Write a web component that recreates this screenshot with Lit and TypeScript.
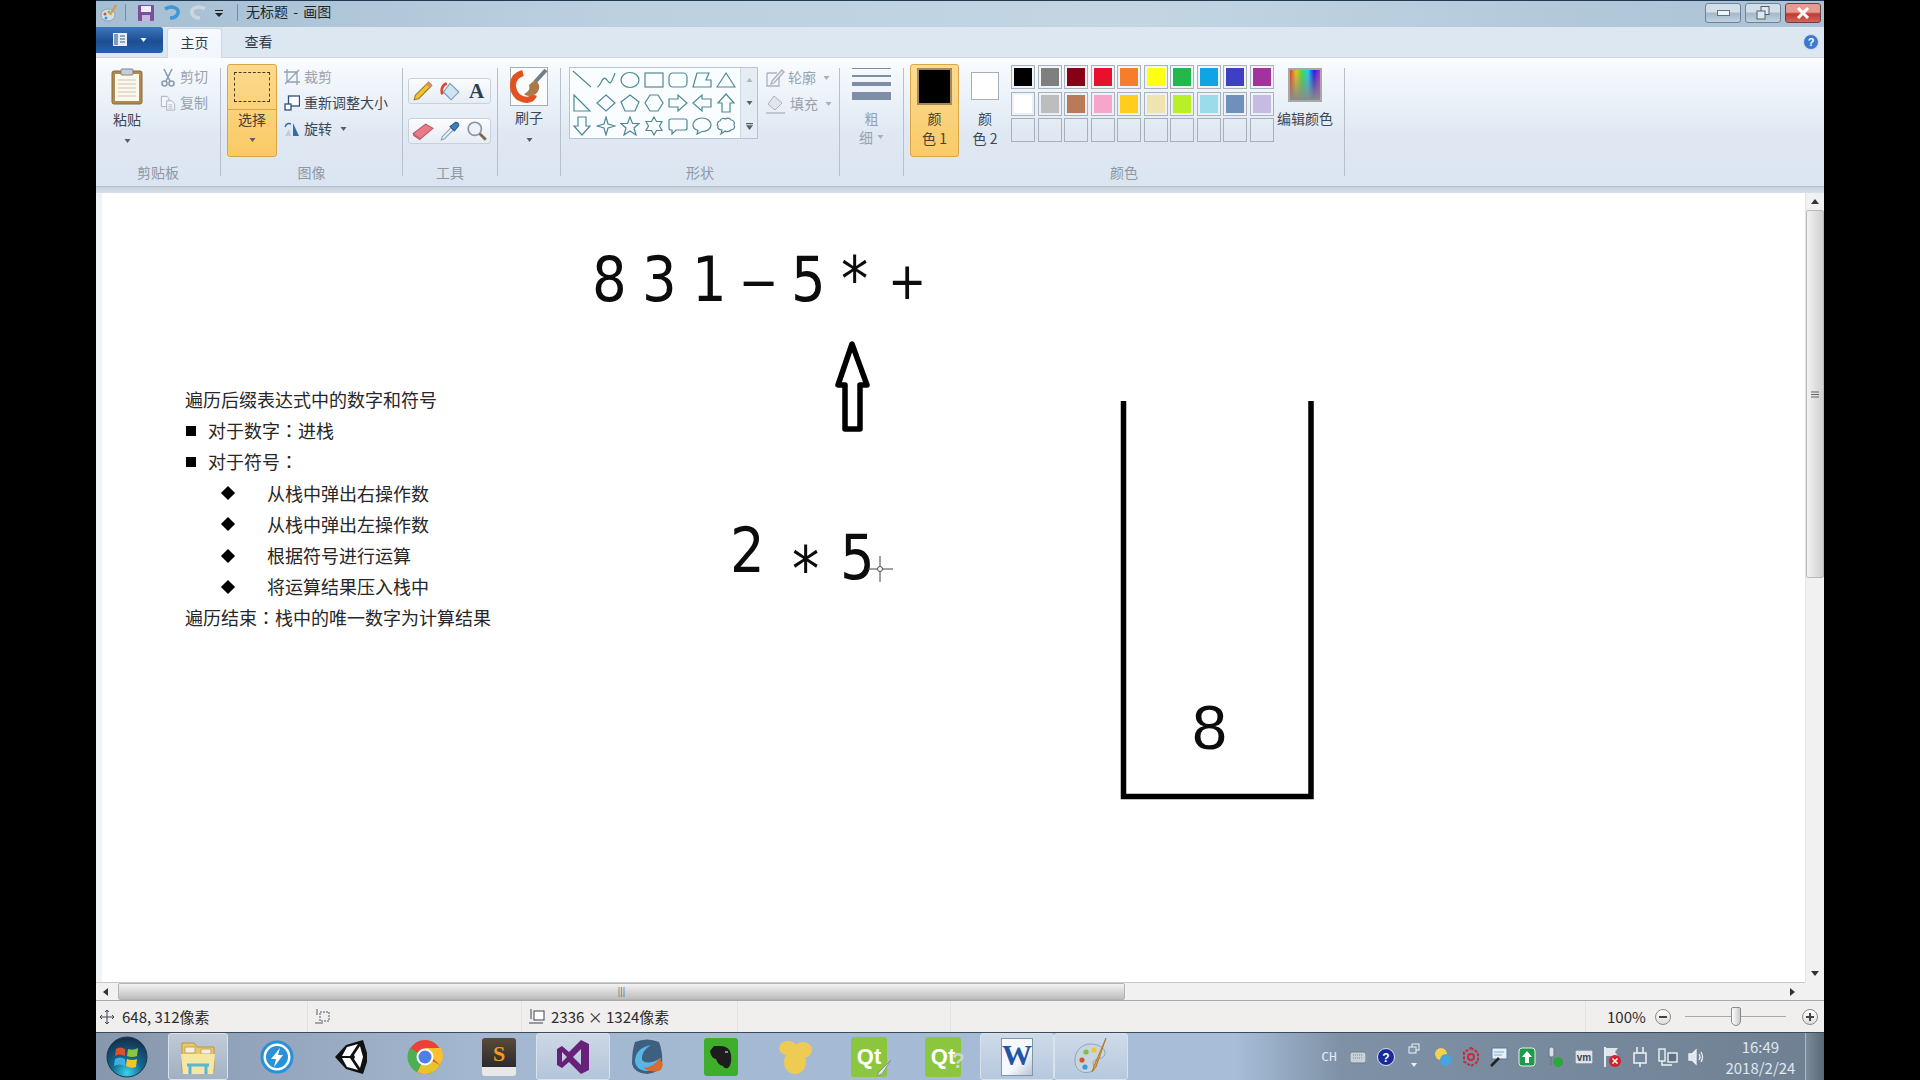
import { LitElement, html, css, svg } from 'lit';
import { customElement } from 'lit/decorators.js';

const paletteRows = [
  ['#000000', '#7f7f7f', '#880015', '#e8112d', '#f77c2c', '#ffff14', '#22b84c', '#0ea5e4', '#3f3fc4', '#a0349c'],
  ['#ffffff', '#bdbdbd', '#b97a57', '#f7a5c8', '#ffce1c', '#efe4b0', '#b9ef26', '#9bdcea', '#7090bc', '#c6bce2'],
];

// shape gallery outlines, 20x20 box
const shapes = [
  svg`<path d="M1 1 19 17"/>`,
  svg`<path d="M1 17C5 17 6 5 10 9S14 17 19 3"/>`,
  svg`<ellipse cx="10" cy="10" rx="9" ry="7.5"/>`,
  svg`<rect x="1" y="3" width="18" height="14"/>`,
  svg`<rect x="1" y="3" width="18" height="14" rx="4"/>`,
  svg`<path d="M1 17 5 3H17L14 10H19V17Z"/>`,
  svg`<path d="M10 3 19 17H1Z"/>`,
  svg`<path d="M2 2 18 18H2Z"/>`,
  svg`<path d="M10 2 19 10 10 18 1 10Z"/>`,
  svg`<path d="M10 2 19 9 15 18H5L1 9Z"/>`,
  svg`<path d="M6 2H14L19 10 14 18H6L1 10Z"/>`,
  svg`<path d="M1 6H10V2L19 10 10 18V14H1Z"/>`,
  svg`<path d="M19 6H10V2L1 10 10 18V14H19Z"/>`,
  svg`<path d="M6 19V10H2L10 1 18 10H14V19Z"/>`,
  svg`<path d="M6 1V10H2L10 19 18 10H14V1Z"/>`,
  svg`<path d="M10 1 12 8 19 10 12 12 10 19 8 12 1 10 8 8Z"/>`,
  svg`<path d="M10 1 12.5 7.5H19L14 12 16 19 10 15 4 19 6 12 1 7.5H7.5Z"/>`,
  svg`<path d="M10 1 12.5 5.5H18L15.5 10 18 14.5H12.5L10 19 7.5 14.5H2L4.500 10 2 5.500H7.500Z"/>`,
  svg`<path d="M3 3H17Q19 3 19 5V12Q19 14 17 14H8L4 18V14H3Q1 14 1 12V5Q1 3 3 3Z"/>`,
  svg`<path d="M10 2C15 2 19 5 19 9S15 15.500 10 15.500L5 18 6 14.500C3 13.500 1 11.500 1 9 1 5 5 2 10 2Z"/>`,
  svg`<path d="M4 5C5 2 8 2 9.500 3 11 1.500 14 2 15 4 18 4 19 7 18 9 19.500 11 18 14 15 14 13 16 10 16 9 15L5 18 6 14C3 14 1 12 2 10 0.500 8 2 5 4 5Z"/>`,
];

const caret = html`<svg class="caret" viewBox="0 0 6 4"><path d="M0 0H6L3 4Z"/></svg>`;

const icons = {
  appMenu: html`<svg width="22" height="14" viewBox="0 0 22 14"><rect width="14" height="13" fill="#e8eef6"/><path d="M1 1H5V12H1Z" fill="#7f9cc0"/><path d="M7 3H12M7 6H12M7 9H12" stroke="#3a5f8e"/></svg>`,
  clipboard: html`<svg width="32" height="37" viewBox="0 0 32 37"><rect x="1" y="3" width="30" height="33" rx="2" fill="#b08a50" stroke="#8a6a38"/><rect x="4" y="6" width="24" height="27" fill="#fbf8ec"/><path d="M7 12H25M7 16H25M7 20H25M7 24H25M7 28H25" stroke="#c9c6b8"/><rect x="10" y="1" width="12" height="6" rx="1" fill="#c9ccd2" stroke="#80848c"/></svg>`,
  scissors: html`<svg width="14" height="19" viewBox="0 0 14 19" fill="none" stroke="#8b99ad" stroke-width="1.600"><path d="M3 1 9 13M11 1 5 13"/><circle cx="3.500" cy="15.500" r="2.500"/><circle cx="10.500" cy="15.500" r="2.500"/></svg>`,
  copy: html`<svg width="18" height="18" viewBox="0 0 18 18" fill="#f3f5f8" stroke="#a5adb8"><path d="M1.500 1.500H8L10 4V13H1.500Z"/><path d="M7.500 6.500H13L16.500 10V17H7.500Z"/><path d="M9.500 11H14M9.500 13H14M9.500 15H14" stroke="#b9bfc8"/></svg>`,
  crop: html`<svg width="16" height="16" viewBox="0 0 16 16" fill="none" stroke="#93a0b1" stroke-width="1.300"><path d="M3 0V13H16M0 3H13V16M1 15 15 1"/></svg>`,
  resize: html`<svg width="16" height="16" viewBox="0 0 16 16" fill="#fff" stroke="#2c4f80" stroke-width="1.300"><rect x="4.500" y="1" width="11" height="10"/><rect x="1" y="9" width="6" height="6"/></svg>`,
  rotate: html`<svg width="16" height="16" viewBox="0 0 16 16"><path d="M9 2 15 15H9Z" fill="#2f6fae"/><path d="M7 15H1L5 8Z" fill="#c5ccd6"/><path d="M1 6Q3 1 7 3" fill="none" stroke="#2f6fae" stroke-width="1.400"/></svg>`,
  pencil: html`<svg width="22" height="22" viewBox="0 0 20 20"><path d="M15 2 18 5 6 17 2 18 3 14Z" fill="#f2c230" stroke="#a07d20"/><path d="M15 2 18 5 16 7 13 4Z" fill="#e58a6e"/></svg>`,
  fill: html`<svg width="22" height="22" viewBox="0 0 20 20"><path d="M10 3 18 11 11 18 4 11Z" fill="#cfe4f3" stroke="#7f98ae"/><path d="M4 11 8 14 11 18Z" fill="#6fa8d4"/><path d="M7 3Q1 6 3 13" fill="none" stroke="#d9482f" stroke-width="2.500"/></svg>`,
  eraser: html`<svg width="22" height="19" viewBox="0 0 21 18"><path d="M1 11 13 2 20 6 8 16Z" fill="#ea7b86" stroke="#b9535f"/><path d="M1 11 8 16V17.500L1 13Z" fill="#c7606d"/></svg>`,
  picker: html`<svg width="22" height="22" viewBox="0 0 20 20"><path d="M2 18 3 15 11 7 13 9 5 17Z" fill="#e8f1f8" stroke="#8ba5bd"/><path d="M10 6 15 2Q18 2 18 5L14 10Z" fill="#3e7fb9" stroke="#2a5d8c"/></svg>`,
  magnifier: html`<svg width="22" height="22" viewBox="0 0 20 20" fill="none"><circle cx="8" cy="8" r="6" fill="#eef3f8" stroke="#8a96a5" stroke-width="1.500"/><path d="M12.500 12.500 18 18" stroke="#7d6a4c" stroke-width="2.600"/></svg>`,
  brush: html`<svg width="38" height="39" viewBox="0 0 38 39"><rect x=".5" y=".5" width="37" height="38" fill="#fbfcfd" stroke="#a5adb8"/><path d="M13 6Q2 9 3 20 5 32 17 33 23 32 24 28" fill="none" stroke="#e0521f" stroke-width="6"/><path d="M36 3 25 15" stroke="#6f7d8c" stroke-width="4"/><path d="M25 13Q33 19 26 27 18 31 14 27 21 24 19 18Z" fill="#a87a48"/></svg>`,
  outline: html`<svg width="20" height="20" viewBox="0 0 20 20" fill="none" stroke="#a9b3bf" stroke-width="1.300"><path d="M2 5H12M2 5V18H14V9"/><path d="M7 13 17 2 19 4 9 15 6 16Z" fill="#eef1f5"/></svg>`,
  bucket: html`<svg width="22" height="20" viewBox="0 0 22 20"><path d="M9 2 17 9 10 16 3 10Z" fill="#e2e6eb" stroke="#a9b3bf"/><path d="M1 19H20" stroke="#bfc6d0" stroke-width="2"/></svg>`,
  move: html`<svg width="14" height="14" viewBox="0 0 14 14" fill="none" stroke="#3d4652"><path d="M7 0V14M0 7H14M5 2 7 0 9 2M5 12 7 14 9 12M2 5 0 7 2 9M12 5 14 7 12 9"/></svg>`,
  selSize: html`<svg width="16" height="16" viewBox="0 0 16 16" fill="none" stroke="#4f5a68"><rect x="5" y="3" width="9" height="9" stroke-dasharray="2 1"/><path d="M2 0V6M0 14H8"/></svg>`,
  imgSize: html`<svg width="16" height="16" viewBox="0 0 16 16" fill="none" stroke="#3d4652"><rect x="5" y="2" width="10" height="9" fill="#fff"/><path d="M2 0V10M0 14H14"/></svg>`,
};

const taskIcons = [
  html`<svg width="42" height="42" viewBox="0 0 42 42"><defs><radialGradient id="orb" cx="50%" cy="90%" r="85%"><stop offset="0" stop-color="#35d6ee"/><stop offset=".45" stop-color="#14688f"/><stop offset="1" stop-color="#12324e"/></radialGradient></defs><circle cx="21" cy="21" r="20" fill="url(#orb)" stroke="#20364c"/><path d="M10 13Q14 10 19 13V20Q14 17 9 20Z" fill="#e2502a"/><path d="M22 13Q27 15 32 12L31 20Q26 22 21 20Z" fill="#8cc63f"/><path d="M9 23Q14 20 19 23V30Q14 27 8 30Z" fill="#3cb0e0"/><path d="M21 23Q26 25 31 23L30 31Q25 33 20 30Z" fill="#f5c32c"/></svg>`,
  html`<svg width="38" height="38" viewBox="0 0 38 38"><path d="M3 5H15L18 9H35V33H3Z" fill="#e9c966" stroke="#b8973e"/><path d="M6 9H16V15H6ZM22 11H32V16H22Z" fill="#f4efe0" stroke="#c2a75f"/><path d="M2 16H36L34 36H4Z" fill="#f5e8a4"/><path d="M11 36V27H27V36M8 27H30" fill="none" stroke="#5cb4d6" stroke-width="3"/></svg>`,
  html`<svg width="34" height="36" viewBox="0 0 34 36"><circle cx="17" cy="18" r="15" fill="#fff" stroke="#2a90d8" stroke-width="3"/><circle cx="17" cy="18" r="11" fill="#2a90d8"/><path d="M20 9 11 20H16L14 28 23 16H18Z" fill="#fff"/></svg>`,
  html`<svg width="34" height="36" viewBox="0 0 34 36"><path d="M1 18 12 6 29 1 33 14V23L29 35 12 30Z" fill="#111"/><path d="M8 17H16L24 5 13 8ZM8 19H16L24 31 13 28ZM20 16 26 7 29 18 26 29 20 20 21 18Z" fill="#fff"/></svg>`,
  html`<svg width="36" height="36" viewBox="0 0 36 36"><circle cx="18" cy="18" r="17" fill="#ea4335"/><path d="M18 18 33 26A17 17 0 0 1 10 33Z" fill="#e9c230"/><path d="M18 18 10 33A17 17 0 0 1 3 9Z" fill="#4caf50"/><path d="M18 9H34A17 17 0 0 1 33 26L24 18Z" fill="#fbc02d"/><circle cx="18" cy="18" r="8.500" fill="#fff"/><circle cx="18" cy="18" r="6.500" fill="#4a80e8"/></svg>`,
  html`<div class="sublime">S</div>`,
  html`<svg width="34" height="36" viewBox="0 0 34 36"><path d="M25 1 33 5V31L25 35 13 23 6 29 1 26V10L6 7 13 13ZM25 10 17 18 25 26ZM6 13V23L11 18Z" fill="#68217a"/></svg>`,
  html`<svg width="36" height="38" viewBox="0 0 36 38"><path d="M6 4Q18 -1 30 4 34 14 33 26 30 35 18 36 5 35 3 26 3 12 6 4Z" fill="#3d5f80"/><path d="M6 24Q6 10 22 7 12 13 13 22 18 28 32 20 28 34 16 33 7 31 6 24Z" fill="#57b6e6"/><path d="M14 30Q26 29 30 20L34 26 32 32Q24 36 14 30Z" fill="#d96a30"/></svg>`,
  html`<svg width="36" height="40" viewBox="0 0 36 40"><rect x="1" y="1" width="34" height="38" rx="3" fill="#3fae2a"/><path d="M11 9H17Q27 9 28 18 29 28 25 31 21 32 20 29 15 28 13 22 8 21 7 14Z" fill="#1d1d1d"/><path d="M22 15H25" stroke="#fff"/></svg>`,
  html`<svg width="38" height="38" viewBox="0 0 38 38" fill="#eecb52"><ellipse cx="12" cy="10" rx="9" ry="7"/><ellipse cx="27" cy="12" rx="9" ry="8"/><ellipse cx="19" cy="24" rx="11" ry="12"/></svg>`,
  html`<div class="qt">Qt<svg class="qt-mark" width="18" height="18" viewBox="0 0 18 18"><path d="M16 1 4 13 2 17 7 15Z" fill="#e2e6ea" stroke="#8a949e"/></svg></div>`,
  html`<div class="qt">Qt<span class="qt-q">?</span></div>`,
  html`<div class="word">W</div>`,
  html`<svg width="38" height="40" viewBox="0 0 38 40"><path d="M21 7C10 6 2 14 3 25S16 38 21 33C24 29 18 26 23 23 28 21 33 21 33 16S27 8 21 7Z" fill="#c6d6e0" stroke="#8fa4b4"/><circle cx="10" cy="23" r="2.600" fill="#e2502a"/><circle cx="14" cy="15" r="2.600" fill="#7cc242"/><circle cx="22" cy="13" r="2.600" fill="#f5c32c"/><circle cx="13" cy="30" r="2.600" fill="#3c9ad8"/><path d="M34 1 24 30 20 35 22 29Z" fill="#e2a03c" stroke="#b5792a"/></svg>`,
];

const trayIcons = [
  html`<svg width="16" height="14" viewBox="0 0 16 14"><rect y="2" width="16" height="11" rx="2" fill="#c8d0d8" stroke="#6f7c88"/><path d="M3 5H13M3 8H13" stroke="#7b8791" stroke-dasharray="1 1"/></svg>`,
  html`<svg width="18" height="18" viewBox="0 0 18 18"><circle cx="9" cy="9" r="8.500" fill="#18299a" stroke="#dde4ee"/><text x="9" y="13.500" font-size="12" font-weight="700" fill="#fff" text-anchor="middle" font-family="Liberation Sans">?</text></svg>`,
  html`<svg width="12" height="28" viewBox="0 0 12 28" fill="none" stroke="#eef2f6"><rect x="4" y="1" width="7" height="6"/><rect x="1" y="4" width="7" height="6" fill="#7f93a8"/><path d="M3 20H9L6 24Z" fill="#eef2f6" stroke="none"/></svg>`,
  html`<svg width="20" height="20" viewBox="0 0 20 20"><circle cx="8" cy="7" r="6" fill="#f4d34c"/><circle cx="13" cy="13" r="6" fill="#4aa3dc"/></svg>`,
  html`<svg width="18" height="20" viewBox="0 0 18 20" fill="none" stroke="#c72a3a" stroke-width="2"><path d="M9 1 16 5.500V14.500L9 19 2 14.500V5.500Z" stroke-dasharray="3 1.500"/><circle cx="9" cy="10" r="3"/></svg>`,
  html`<svg width="18" height="20" viewBox="0 0 18 20"><rect x="2" y="1" width="15" height="11" fill="#e8f0f6" stroke="#4b7fa8"/><path d="M4 5H14M4 8H12" stroke="#7fa8c8"/><path d="M1 19 9 11" stroke="#222" stroke-width="2.500"/></svg>`,
  html`<svg width="18" height="20" viewBox="0 0 18 20"><rect x="1" y="1" width="16" height="18" rx="3" fill="#1d9a4b" stroke="#dff3e4"/><path d="M9 4 14 10H11V16H7V10H4Z" fill="#fff"/></svg>`,
  html`<svg width="18" height="22" viewBox="0 0 18 22"><rect x="3" y="1" width="5" height="10" rx="2" fill="#d9dfe5" stroke="#68747f"/><path d="M5 11V19" stroke="#68747f"/><circle cx="12" cy="16" r="5" fill="#2aa83c"/></svg>`,
  html`<svg width="18" height="14" viewBox="0 0 18 14"><rect width="18" height="14" fill="#dfe5ea" stroke="#59646f"/><text x="9" y="11" font-size="10" font-weight="700" fill="#3d4752" text-anchor="middle" font-family="Liberation Sans">vm</text></svg>`,
  html`<svg width="18" height="22" viewBox="0 0 18 22"><path d="M2 1V21" stroke="#e8edf2" stroke-width="2"/><path d="M3 2H15L12 6 15 10H3Z" fill="#dfe5ea"/><circle cx="12" cy="15" r="6" fill="#d3222e"/><path d="M9.500 12.500 14.500 17.500M14.500 12.500 9.500 17.500" stroke="#fff" stroke-width="1.500"/></svg>`,
  html`<svg width="18" height="22" viewBox="0 0 18 22" fill="none" stroke="#eef2f6" stroke-width="1.500"><rect x="3" y="7" width="12" height="10"/><path d="M6 1V7M12 1V7M9 17V21"/></svg>`,
  html`<svg width="20" height="20" viewBox="0 0 20 20" fill="none" stroke="#eef2f6" stroke-width="1.400"><rect x="1" y="2" width="6" height="12"/><rect x="10" y="6" width="9" height="9" fill="#5d7080"/><path d="M4 14V18H14"/></svg>`,
  html`<svg width="16" height="18" viewBox="0 0 16 18" fill="none" stroke="#eef2f6" stroke-width="1.300"><path d="M1 6H4L8 2V16L4 12H1Z" fill="#dfe5ea"/><path d="M11 6Q13 9 11 12M13 4Q16 9 13 14"/></svg>`,
];

// free canvas items, x/y relative to the canvas
const glyphs = [
  { c: '8', x: 490, y: 56, cls: 'big' },
  { c: '3', x: 540, y: 56, cls: 'big' },
  { c: '1', x: 590, y: 56, cls: 'big' },
  { c: '–', x: 638, y: 56, cls: 'big dash' },
  { c: '5', x: 689, y: 56, cls: 'big' },
  { c: '*', x: 739, y: 56, cls: 'big' },
  { c: '+', x: 786, y: 62, cls: 'big plus' },
  { c: '2', x: 628, y: 327, cls: 'big' },
  { c: '*', x: 690, y: 346, cls: 'big' },
  { c: '5', x: 738, y: 334, cls: 'big' },
  { c: '8', x: 1090, y: 503, cls: 'stack' },
];

const listLines = [
  { t: '遍历后缀表达式中的数字和符号', k: '' },
  { t: '对于数字：进栈', k: 'square' },
  { t: '对于符号：', k: 'square' },
  { t: '从栈中弹出右操作数', k: 'diamond' },
  { t: '从栈中弹出左操作数', k: 'diamond' },
  { t: '根据符号进行运算', k: 'diamond' },
  { t: '将运算结果压入栈中', k: 'diamond' },
  { t: '遍历结束：栈中的唯一数字为计算结果', k: '' },
];

@customElement('app-root')
export class AppRoot extends LitElement {
  static styles = css`
    :host {
      display: block;
      width: 1920px;
      height: 1080px;
      background: #000;
      overflow: hidden;
      font-family: 'Noto Sans CJK SC', 'Noto Sans', sans-serif;
      font-size: 14px;
      color: #3d4652;
    }
    svg { display: block; flex: none; }
    .window {
      width: 1728px;
      height: 1080px;
      margin-left: 96px;
      display: flex;
      flex-direction: column;
      filter: blur(0.45px);
    }

    /* title bar */
    .title {
      height: 26px;
      flex: none;
      box-sizing: content-box;
      display: flex;
      align-items: flex-start;
      padding-left: 4px;
      border-top: 1px solid #203a56;
      background: linear-gradient(90deg, #a5bed2, #bcd0e0 30%, #c3d5e3 60%, #a9c2d5);
    }
    .title > svg { margin: 3px 8px 0 0; }
    .title > .first { margin-right: 7px; }
    .title-sep { width: 1px; height: 17px; background: #7c8b9a; margin: 3px 11px 0 0; }
    .title-sep.second { margin: 3px 8px 0 6px; }
    .title > .drop { margin-top: 8px; }
    .title-text { color: #20262c; line-height: 20px; word-spacing: 2px; }
    .win-btns { margin-left: auto; display: flex; gap: 4px; padding: 2px 3px 0 0; }
    .win-btn {
      width: 36px;
      height: 20px;
      border: 1px solid #6f8296;
      border-radius: 3px;
      box-sizing: border-box;
      display: flex;
      align-items: center;
      justify-content: center;
      background: linear-gradient(#d2dfe9 45%, #a4b8c9 50%, #c2d2df);
    }
    .win-btn.close { background: linear-gradient(#e59a92 45%, #c0392f 55%, #d2665c); border-color: #6d3f45; }

    /* tabs */
    .tabs {
      height: 31px;
      flex: none;
      display: flex;
      align-items: flex-end;
      background: #dde7f2;
      border-bottom: 1px solid #cdd6e1;
      box-sizing: border-box;
    }
    .app-btn {
      width: 67px;
      height: 26px;
      margin-bottom: 4px;
      border-radius: 0 3px 3px 0;
      background: linear-gradient(#3d77bd, #1c4f92 55%, #2762aa);
      display: flex;
      align-items: center;
      justify-content: center;
      gap: 5px;
    }
    .app-btn .caret { fill: #fff; }
    .tab { width: 55px; height: 29px; line-height: 26px; text-align: center; color: #2f3a48; }
    .tab.on { margin-left: 4px; background: linear-gradient(#f6f9fd, #f2f6fb); border: 1px solid #cfd8e3; border-bottom: 0; border-radius: 3px 3px 0 0; box-sizing: border-box; margin-bottom: -1px; height: 30px; }
    .tab.plain { margin-left: 9px; }
    .help { margin-left: auto; margin-right: 5px; margin-bottom: 7px; }

    /* ribbon */
    .ribbon {
      height: 129px;
      flex: none;
      box-sizing: border-box;
      padding-top: 6px;
      display: flex;
      align-items: flex-start;
      background: linear-gradient(#fafcff, #eef4fa 25%, #dfe8f3 60%, #dbe5f1);
      border-bottom: 1px solid #b6c1cf;
    }
    .sep { width: 1px; height: 108px; margin-top: 4px; background: #b7c0cb; flex: none; }
    .group { height: 120px; display: flex; flex-direction: column; flex: none; }
    .body { height: 100px; display: flex; align-items: flex-start; box-sizing: border-box; flex: none; }
    .group-label { height: 20px; line-height: 16px; text-align: center; color: #8e97a3; }
    .caret { width: 7px; height: 4px; fill: #56606c; }
    .col { display: flex; flex-direction: column; align-items: center; }
    .lbl { line-height: 20px; }
    .lbl.off { color: #99a1ac; }
    .small-col { display: flex; flex-direction: column; }
    .row { height: 26px; display: flex; align-items: center; gap: 4px; white-space: nowrap; }
    .row span { padding-bottom: 2px; }
    .row.off { color: #9aa2ad; }
    .row .caret { margin-left: 4px; }
    .off .caret { fill: #a9b0ba; }

    .clip { width: 124px; }
    .clip .body { padding-left: 12px; }
    .paste { width: 38px; padding-top: 4px; }
    .paste .lbl { margin-top: 4px; }
    .paste .caret { margin-top: 10px; }
    .clip .small-col { margin-left: 14px; }
    .clip .row svg:first-child { width: 16px; }

    .image { width: 181px; }
    .image .body { padding-left: 6px; }
    .select {
      width: 50px;
      height: 93px;
      box-sizing: border-box;
      border: 1px solid #d9a644;
      border-radius: 3px;
      background: linear-gradient(#fbd98d, #fbd27c 45%, #f9ca66);
      display: flex;
      flex-direction: column;
      align-items: center;
      color: #4a4230;
    }
    .select-top { width: 100%; height: 44px; border-bottom: 1px solid #d9a644; display: flex; align-items: center; justify-content: center; }
    .marquee { width: 34px; height: 28px; border: 1px dashed #4a3a20; }
    .select .lbl { margin-top: -1px; }
    .select .caret { margin-top: 9px; }
    .image .small-col { margin-left: 7px; }

    .tools { width: 94px; }
    .tools .body { padding: 14px 0 0 5px; flex-direction: column; gap: 14px; }
    .tool-row {
      width: 83px;
      height: 26px;
      box-sizing: border-box;
      border: 1px solid #c8d0da;
      border-radius: 3px;
      background: linear-gradient(#fbfcfe, #e6edf5);
      display: grid;
      grid-template-columns: repeat(3, 1fr);
      align-items: center;
      justify-items: center;
    }
    .letter-a { font: 700 21px/24px 'Liberation Serif', serif; color: #2c3e54; }

    .brush { width: 62px; }
    .brush .body { padding-left: 12px; }
    .brush .col { width: 38px; padding-top: 3px; }
    .brush .lbl { margin-top: 1px; }
    .brush .caret { margin-top: 11px; }

    .shapes { width: 278px; }
    .shapes .body { padding-left: 8px; gap: 7px; }
    .gallery {
      margin-top: 3px;
      width: 189px;
      height: 72px;
      box-sizing: border-box;
      border: 1px solid #b9c3cf;
      background: #fafdff;
      display: flex;
    }
    .shape-grid { width: 171px; box-sizing: border-box; padding-right: 2px; display: grid; grid-template-columns: repeat(7, 1fr); grid-auto-rows: 1fr; align-items: center; justify-items: center; }
    .shape-grid svg { fill: none; stroke: #4f8795; stroke-width: 1.200; width: 20px; height: 20px; }
    .scroll-col { width: 16px; border-left: 1px solid #d0d8e2; background: #e6ecf4; display: grid; grid-auto-rows: 1fr; align-items: center; justify-items: center; }
    .shape-side { padding-top: 1px; }
    .shape-side .row { gap: 3px; }

    .lines { width: 63px; }
    .lines .col { width: 39px; margin-left: 12px; }
    .line-stack { width: 39px; height: 32px; margin-top: 4px; display: flex; flex-direction: column; gap: 5.500px; align-items: stretch; }
    .line-stack div { background: #7f8da6; flex: none; }
    .lines .lbl1 { margin-top: 8px; }
    .lbl-arrow { display: flex; align-items: center; gap: 4px; margin-top: -1px; }

    .colors { width: 440px; }
    .colors .body { padding-left: 6px; }
    .color1 {
      width: 49px;
      height: 93px;
      box-sizing: border-box;
      border: 1px solid #d9a644;
      border-radius: 3px;
      background: linear-gradient(#fbdb93, #f9cb68);
      color: #4a4230;
      padding-top: 3px;
    }
    .swatch1 { width: 35px; height: 37px; background: #000; border: 2px solid #a18a5e; box-sizing: border-box; }
    .color1 .lbl { margin-top: 3px; }
    .color1 .lbl + .lbl { margin-top: 0; }
    .color2 { width: 44px; margin-left: 4px; padding-top: 8px; }
    .swatch2 { width: 28px; height: 28px; background: #fff; border: 1px solid #a5adb8; box-sizing: border-box; }
    .color2 .lbl { margin-top: 8px; }
    .color2 .lbl + .lbl { margin-top: 0; }
    .palette { margin: 1px 0 0 4px; display: grid; grid-template-columns: repeat(10, 24px); grid-auto-rows: 24px; gap: 2.500px; }
    .cell { border: 1px solid #a8b0bb; box-sizing: border-box; background: transparent; }
    .cell.fill { border-color: #aab2bc; box-shadow: inset 0 0 0 1px #eef2f6; padding: 2px; }
    .cell-color { width: 100%; height: 100%; }
    .edit { width: 57px; margin-left: 3px; padding-top: 4px; white-space: nowrap; }
    .edit-swatch {
      width: 34px;
      height: 34px;
      box-sizing: border-box;
      border: 2px solid #a8a8a8;
      background: linear-gradient(transparent, #8a8a8a), linear-gradient(90deg, #e04020, #f0c020, #40e040, #20d0f0, #2020e0, #d020c0);
    }
    .edit .lbl { margin-top: 6px; }

    .band { height: 6px; flex: none; background: linear-gradient(#c6d0dc, #d9e0e9); }

    /* work area */
    .work { flex: 1; min-height: 0; display: grid; grid-template-columns: 6px 1fr 19px; grid-template-rows: 1fr 19px; background: #f0f3f8; }
    .canvas { grid-column: 2; grid-row: 1; background: #fff; position: relative; overflow: hidden; }
    .glyph { position: absolute; line-height: 1; color: #0c0c0c; white-space: pre; }
    .glyph.big { font: 62px/1 'DejaVu Sans', sans-serif; transform: scaleX(0.88); transform-origin: left top; }
    .glyph.dash { transform: scaleX(1.200); }
    .glyph.plus { font-size: 52px; }
    .glyph.stack { font: 63px/1 'Liberation Sans', sans-serif; }
    .drawing { position: absolute; left: 0; top: 0; }
    .list { position: absolute; left: 83px; top: 191px; font-size: 18px; line-height: 31.200px; color: #262626; }
    .list-line { display: flex; align-items: center; height: 31.200px; white-space: pre; }
    .colon { font-family: 'Noto Sans CJK TC', sans-serif; }
    .square-l { padding-left: 1px; }
    .square-l::before { content: ''; width: 10px; height: 10px; background: #000; margin-right: 12px; }
    .diamond-l { padding-left: 38px; }
    .diamond-l::before { content: ''; width: 10px; height: 10px; background: #000; transform: rotate(45deg); margin-right: 34px; }

    .vbar { grid-column: 3; grid-row: 1; background: #f1f1f1; display: flex; flex-direction: column; align-items: center; border-left: 1px solid #e4e4e4; }
    .vbar .arrow { height: 17px; display: flex; align-items: center; }
    .vthumb { width: 100%; height: 368px; box-sizing: border-box; border: 1px solid #b9b9b9; border-radius: 2px; background: linear-gradient(90deg, #f2f2f2, #cfcfcf); display: flex; align-items: center; justify-content: center; }
    .vtrack { flex: 1; }
    .hbar { grid-column: 1 / 3; grid-row: 2; background: #f1f1f1; display: flex; align-items: stretch; border-top: 1px solid #c9c9c9; border-bottom: 1px solid #a9a9a9; box-sizing: border-box; }
    .hbar .arrow { width: 22px; padding-left: 7px; box-sizing: border-box; display: flex; align-items: center; flex: none; }
    .hthumb { width: 1007px; box-sizing: border-box; border: 1px solid #b4b4b4; border-radius: 2px; background: linear-gradient(#f3f3f3, #bdbdbd); display: flex; align-items: center; justify-content: center; font-size: 9px; color: #555; flex: none; }
    .htrack { flex: 1; display: flex; justify-content: flex-end; align-items: center; padding-right: 10px; }
    .corner { grid-column: 3; grid-row: 2; background: #f1f1f1; border-bottom: 1px solid #a9a9a9; box-sizing: border-box; }

    /* status bar */
    .status { height: 31px; flex: none; display: flex; background: #f1eeee; color: #2c2c2c; font-size: 15px; line-height: 31px; }
    .seg { display: flex; align-items: center; gap: 8px; box-sizing: border-box; border-right: 1px solid #e2e0e0; padding-left: 5px; flex: none; white-space: nowrap; }
    .seg:nth-child(1) { width: 212px; padding-left: 4px; }
    .seg:nth-child(2) { width: 214px; padding-left: 7px; }
    .seg:nth-child(3) { width: 216px; padding-left: 7px; gap: 6px; }
    .seg:nth-child(4) { width: 213px; }
    .seg:nth-child(5) { width: 635px; }
    .zoom { flex: 1; display: flex; align-items: center; padding-left: 21px; }
    .zoom-btn { width: 16px; height: 16px; border-radius: 50%; box-sizing: border-box; border: 1px solid #8b8b8b; background: linear-gradient(#fff, #ddd); display: flex; align-items: center; justify-content: center; flex: none; }
    .zoom-btn.minus { margin-left: 9px; }
    .zoom-track { width: 101px; height: 1px; margin: 0 16px 0 14px; background: #a9a9a9; position: relative; flex: none; }
    .zoom-thumb { position: absolute; left: 46px; top: -9px; width: 10px; height: 19px; box-sizing: border-box; border: 1px solid #8a8a8a; border-radius: 2px 2px 5px 5px; background: linear-gradient(90deg, #fff, #c9c9c9); }

    /* taskbar */
    .taskbar {
      height: 48px;
      flex: none;
      display: flex;
      align-items: center;
      border-top: 1px solid #3d4a58;
      box-sizing: border-box;
      background: linear-gradient(90deg, #8797ad, #a3b7d0 22%, #a7bdd8 62%, #a7bdd8 66%, #7e91a6 72%, #6f8092 100%);
      color: #eef2f6;
    }
    .slot { height: 47px; display: flex; align-items: center; justify-content: center; box-sizing: border-box; flex: none; }
    .slot.open { border: 1px solid #d8e2ec; border-radius: 3px; background: linear-gradient(rgba(255,255,255,.45), rgba(255,255,255,.18)); }
    .slot.orb { padding-right: 10px; }
    .qt { width: 36px; height: 40px; border-radius: 3px; background: #8cc63f; font: 700 22px/40px 'Liberation Sans', sans-serif; color: #fff; text-align: center; position: relative; }
    .qt-mark { position: absolute; right: -6px; bottom: 0; }
    .qt-q { position: absolute; right: -4px; bottom: -4px; color: #c9d4dc; font-size: 22px; }
    .sublime { width: 34px; height: 38px; border-radius: 3px; background: linear-gradient(#5a4a3a, #2c2c2c 75%, #e8e8e8 76%); color: #f29a1f; font: 700 22px/32px 'Liberation Serif', serif; text-align: center; }
    .word { width: 32px; height: 38px; background: linear-gradient(135deg, #f6f8fb 60%, #b9c6d4); border: 1px solid #7f95ad; box-sizing: border-box; color: #1e56a8; font: 700 30px/32px 'Liberation Serif', serif; text-align: center; }
    .tray { display: flex; align-items: center; margin-left: 186px; flex: none; }
    .tray-item { width: 28.200px; display: flex; justify-content: center; flex: none; }
    .ch { font: 13px 'DejaVu Sans Mono', monospace; color: #e4eaf0; width: 30px; text-align: center; flex: none; }
    .clock { width: 84px; margin-left: 8px; text-align: center; font-size: 15px; line-height: 21px; color: #dfe7ef; white-space: nowrap; flex: none; }
    .show { width: 19px; height: 47px; margin-left: auto; background: linear-gradient(90deg, #7c8b9c, #596776); border-left: 1px solid #a9b6c3; box-sizing: border-box; flex: none; }
  `;

  private renderRibbon() {
    return html`<div class="ribbon">
      <div class="group clip">
        <div class="body">
          <div class="col paste">${icons.clipboard}<div class="lbl">粘贴</div>${caret}</div>
          <div class="small-col">
            <div class="row off">${icons.scissors}<span>剪切</span></div>
            <div class="row off">${icons.copy}<span>复制</span></div>
          </div>
        </div>
        <div class="group-label">剪贴板</div>
      </div>
      <div class="sep"></div>
      <div class="group image">
        <div class="body">
          <div class="select">
            <div class="select-top"><div class="marquee"></div></div>
            <div class="lbl">选择</div>
            ${caret}
          </div>
          <div class="small-col">
            <div class="row off">${icons.crop}<span>裁剪</span></div>
            <div class="row">${icons.resize}<span>重新调整大小</span></div>
            <div class="row">${icons.rotate}<span>旋转</span>${caret}</div>
          </div>
        </div>
        <div class="group-label">图像</div>
      </div>
      <div class="sep"></div>
      <div class="group tools">
        <div class="body">
          <div class="tool-row">${icons.pencil}${icons.fill}<span class="letter-a">A</span></div>
          <div class="tool-row">${icons.eraser}${icons.picker}${icons.magnifier}</div>
        </div>
        <div class="group-label">工具</div>
      </div>
      <div class="sep"></div>
      <div class="group brush">
        <div class="body">
          <div class="col">${icons.brush}<div class="lbl">刷子</div>${caret}</div>
        </div>
      </div>
      <div class="sep"></div>
      <div class="group shapes">
        <div class="body">
          <div class="gallery">
            <div class="shape-grid">
              ${shapes.map((s) => html`<svg viewBox="0 0 20 20">${s}</svg>`)}
            </div>
            <div class="scroll-col">
              <svg width="7" height="4" viewBox="0 0 6 4" fill="#aeb6c1"><path d="M0 4H6L3 0Z"/></svg>
              ${caret}
              <svg width="7" height="7" viewBox="0 0 6 6" fill="#56606c"><path d="M0 0H6V1H0ZM0 2H6L3 6Z"/></svg>
            </div>
          </div>
          <div class="small-col shape-side">
            <div class="row off">${icons.outline}<span>轮廓</span>${caret}</div>
            <div class="row off">${icons.bucket}<span>填充</span>${caret}</div>
          </div>
        </div>
        <div class="group-label">形状</div>
      </div>
      <div class="sep"></div>
      <div class="group lines">
        <div class="body">
          <div class="col">
            <div class="line-stack">
              <div style="height:1px"></div>
              <div style="height:2px"></div>
              <div style="height:4px"></div>
              <div style="height:8px"></div>
            </div>
            <div class="lbl off lbl1">粗</div>
            <div class="lbl off lbl-arrow">细 ${caret}</div>
          </div>
        </div>
      </div>
      <div class="sep"></div>
      <div class="group colors">
        <div class="body">
          <div class="col color1">
            <div class="swatch1"></div>
            <div class="lbl">颜</div>
            <div class="lbl">色 1</div>
          </div>
          <div class="col color2">
            <div class="swatch2"></div>
            <div class="lbl">颜</div>
            <div class="lbl">色 2</div>
          </div>
          <div class="palette">
            ${paletteRows.flat().map((c) => html`<div class="cell fill"><div class="cell-color" style="background:${c}"></div></div>`)}
            ${Array.from({ length: 10 }, () => html`<div class="cell"></div>`)}
          </div>
          <div class="col edit">
            <div class="edit-swatch"></div>
            <div class="lbl">编辑颜色</div>
          </div>
        </div>
        <div class="group-label">颜色</div>
      </div>
      <div class="sep"></div>
    </div>`;
  }

  private renderCanvas() {
    return html`<div class="canvas">
      ${glyphs.map((g) => html`<span class="glyph ${g.cls}" style="left:${g.x}px;top:${g.y}px">${g.c}</span>`)}
      <svg class="drawing" width="1400" height="790" viewBox="102 193 1400 790" fill="none" stroke="#000">
        <path d="M852 344 838 385H845V429H860V385H867Z" stroke-width="5.500" stroke-linejoin="round"/>
        <path d="M1123.500 401V796.500H1311V401" stroke-width="5.500"/>
        <circle cx="880" cy="569" r="2.500" stroke-width="1" stroke="#444"/>
        <path d="M868 569H877M883 569H893M880 556V566M880 572V582" stroke-width="1" stroke="#444"/>
      </svg>
      <div class="list">
        ${listLines.map((l) => {
          const parts = l.t.split('：');
          return html`<div class="list-line ${l.k ? l.k + '-l' : ''}"><span>${parts[0]}${parts.length > 1
            ? html`<span class="colon">：</span>${parts[1]}`
            : ''}</span></div>`;
        })}
      </div>
    </div>`;
  }

  render() {
    return html`<div class="window">
      <div class="title">
        <svg class="first" width="18" height="18" viewBox="0 0 18 18"><ellipse cx="8" cy="11" rx="7" ry="6" fill="#d4dee6" stroke="#8fa4b4"/><circle cx="5" cy="10" r="1.500" fill="#e2502a"/><circle cx="9" cy="8" r="1.500" fill="#7cc242"/><circle cx="6" cy="14" r="1.500" fill="#3c9ad8"/><path d="M16 1 10 11" stroke="#d99a3a" stroke-width="2"/></svg>
        <div class="title-sep"></div>
        <svg width="18" height="18" viewBox="0 0 18 18"><rect x="1" y="1" width="16" height="16" rx="1" fill="#7b4f9e"/><rect x="4" y="2" width="10" height="6" fill="#eceff4"/><rect x="5" y="11" width="8" height="6" fill="#c9b9d8"/></svg>
        <svg width="18" height="16" viewBox="0 0 18 16" fill="none" stroke="#3f97d8" stroke-width="3.500"><path d="M2 5C9 1 16 4 15 9 14 13 10 14 7 14"/></svg>
        <svg width="18" height="16" viewBox="0 0 18 16" fill="none" stroke="#cdd6de" stroke-width="3.500"><path d="M16 5C9 1 2 4 3 9 4 13 8 14 11 14"/></svg>
        <svg class="drop" width="8" height="8" viewBox="0 0 8 8" fill="#222"><path d="M0 1H8V2H0ZM0 4H8L4 8Z"/></svg>
        <div class="title-sep second"></div>
        <div class="title-text">无标题 - 画图</div>
        <div class="win-btns">
          <div class="win-btn"><svg width="13" height="6" viewBox="0 0 13 6"><rect x=".5" y=".5" width="12" height="5" fill="#eef3f7" stroke="#5f7286"/></svg></div>
          <div class="win-btn"><svg width="14" height="14" viewBox="0 0 14 14" fill="#dfe8ef" stroke="#4f6072"><rect x="5" y=".5" width="8" height="8"/><rect x="1" y="5" width="8" height="8"/></svg></div>
          <div class="win-btn close"><svg width="14" height="12" viewBox="0 0 14 12" stroke="#fff" stroke-width="3"><path d="M2 1 12 11M12 1 2 11"/></svg></div>
        </div>
      </div>
      <div class="tabs">
        <div class="app-btn">${icons.appMenu}${caret}</div>
        <div class="tab on">主页</div>
        <div class="tab plain">查看</div>
        <svg class="help" width="16" height="16" viewBox="0 0 16 16"><circle cx="8" cy="8" r="7.500" fill="#3f78cf" stroke="#cddcf0"/><text x="8" y="12" font-size="11" font-weight="700" fill="#fff" text-anchor="middle" font-family="Liberation Sans">?</text></svg>
      </div>
      ${this.renderRibbon()}
      <div class="band"></div>
      <div class="work">
        ${this.renderCanvas()}
        <div class="vbar">
          <div class="arrow"><svg width="8" height="5" viewBox="0 0 8 5" fill="#333"><path d="M0 5H8L4 0Z"/></svg></div>
          <div class="vthumb"><svg width="8" height="7" viewBox="0 0 8 7" stroke="#666"><path d="M0 1H8M0 3.500H8M0 6H8"/></svg></div>
          <div class="vtrack"></div>
          <div class="arrow"><svg width="8" height="5" viewBox="0 0 8 5" fill="#333"><path d="M0 0H8L4 5Z"/></svg></div>
        </div>
        <div class="hbar">
          <div class="arrow"><svg width="5" height="8" viewBox="0 0 5 8" fill="#333"><path d="M5 0V8L0 4Z"/></svg></div>
          <div class="hthumb">|||</div>
          <div class="htrack"><svg width="5" height="8" viewBox="0 0 5 8" fill="#333"><path d="M0 0V8L5 4Z"/></svg></div>
        </div>
        <div class="corner"></div>
      </div>
      <div class="status">
        <div class="seg">${icons.move}<span>648, 312像素</span></div>
        <div class="seg">${icons.selSize}</div>
        <div class="seg">${icons.imgSize}<span>2336 × 1324像素</span></div>
        <div class="seg"></div>
        <div class="seg"></div>
        <div class="zoom">
          <span>100%</span>
          <div class="zoom-btn minus"><svg width="8" height="2" viewBox="0 0 8 2" fill="#444"><rect width="8" height="2"/></svg></div>
          <div class="zoom-track"><div class="zoom-thumb"></div></div>
          <div class="zoom-btn"><svg width="8" height="8" viewBox="0 0 8 8" fill="#444"><path d="M3 0H5V3H8V5H5V8H3V5H0V3H3Z"/></svg></div>
        </div>
      </div>
      <div class="taskbar">
        ${taskIcons.map((icon, i) => {
          const open = i === 1 || i === 6 || i === 12 || i === 13;
          return html`<div class="slot ${open ? 'open' : ''} ${i === 0 ? 'orb' : ''}" style="width:${i === 0 ? 72 : i === 1 ? 60 : 74}px;margin-left:${i === 2 ? 12 : 0}px">${icon}</div>`;
        })}
        <div class="tray">
          <span class="ch">CH</span>
          ${trayIcons.map((t) => html`<div class="tray-item">${t}</div>`)}
        </div>
        <div class="clock">16:49<br />2018/2/24</div>
        <div class="show"></div>
      </div>
    </div>`;
  }
}
